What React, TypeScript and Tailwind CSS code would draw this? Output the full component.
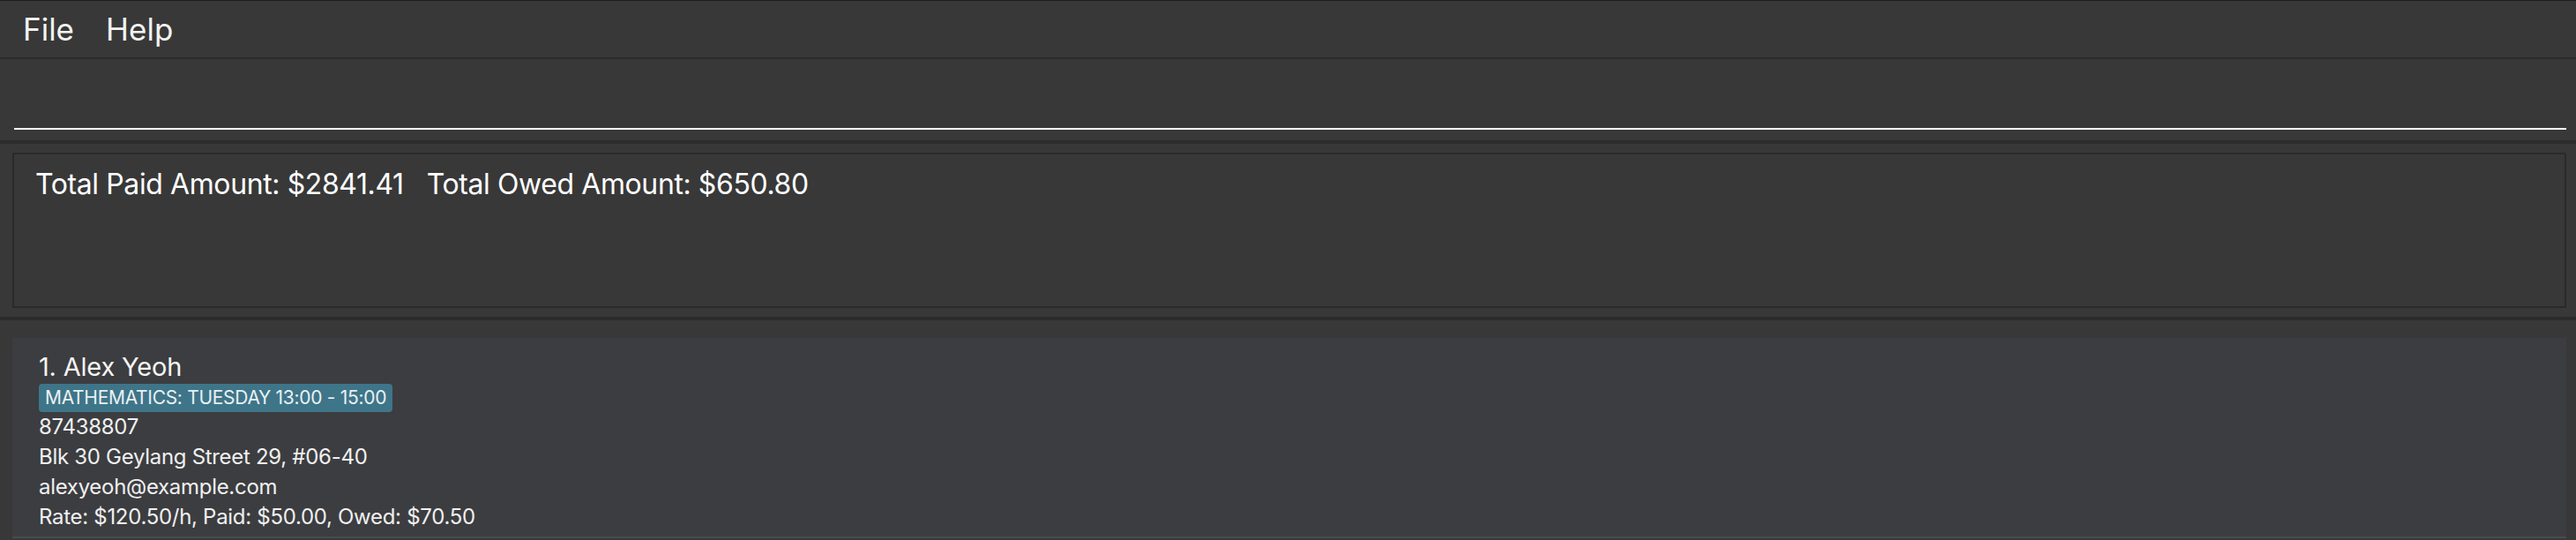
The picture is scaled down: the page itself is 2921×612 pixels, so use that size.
import React from "react";

const font = { fontFamily: "Inter, 'Noto Sans', sans-serif" };

export default function App() {
  return (
    <div
      className="w-[2921px] h-[612px] overflow-hidden bg-[#383838] text-white flex flex-col border-t border-[#1c1c1c]"
      style={font}
    >
      {/* Menu bar */}
      <div className="h-[64px] flex items-center pl-[26px] gap-[36px] text-[35px] leading-[64px] text-[#f2f2f2] bg-[#383838]">
        <span>File</span>
        <span>Help</span>
      </div>
      <div className="h-[2px] bg-[#2c2c2c]" />

      {/* Command box */}
      <div className="h-[92px] pl-[16px] pr-[11px] pt-[10px] flex flex-col">
        <div className="h-[70px] border-b-2 border-white" />
      </div>
      <div className="h-[4px] bg-[#2c2c2c]" />

      {/* Result display */}
      <div className="h-[196px] pl-[14px] pr-[11px] py-[10px]">
        <div className="h-full border-2 border-[#2a2a2a] pl-[24px] pt-[14px] flex gap-[26px] text-[32px] leading-[40px] tracking-[-0.4px]">
          <span>Total Paid Amount: $2841.41</span>
          <span>Total Owed Amount: $650.80</span>
        </div>
      </div>
      <div className="h-[4px] bg-[#2c2c2c]" />

      {/* Person list */}
      <div className="flex-1 pl-[14px] pr-[11px] pt-[20px]">
        <div className="h-[227px] bg-[#3c3d40] pl-[30px] pt-[16px] flex flex-col items-start border-b-2 border-[#4a4b4d]">
          <div className="text-[29px] leading-[34px] text-[#f4f4f4] tracking-[-0.2px]">1. Alex Yeoh</div>
          <div className="mt-[2px] h-[32px] bg-[#3e7589] rounded-[4px] px-[7px] text-[21px] leading-[32px] text-[#eaf0f2] tracking-[-0.3px]">
            MATHEMATICS: TUESDAY 13:00 - 15:00
          </div>
          <div className="text-[24px] leading-[34px] text-[#f0f0f0] tracking-[-0.3px]">87438807</div>
          <div className="text-[24px] leading-[34px] text-[#f0f0f0] tracking-[-0.3px]">Blk 30 Geylang Street 29, #06-40</div>
          <div className="text-[24px] leading-[34px] text-[#f0f0f0] tracking-[-0.3px]">alexyeoh@example.com</div>
          <div className="text-[24px] leading-[34px] text-[#f0f0f0] tracking-[-0.3px]">Rate: $120.50/h, Paid: $50.00, Owed: $70.50</div>
        </div>
      </div>
    </div>
  );
}
